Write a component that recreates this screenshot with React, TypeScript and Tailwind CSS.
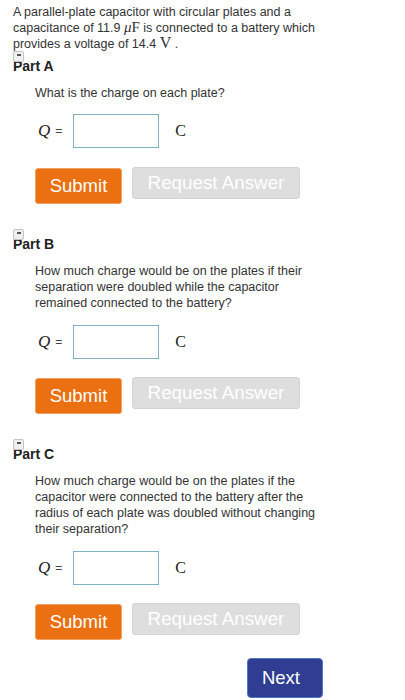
import React from "react"

const serif = "font-['Liberation_Serif',serif]"

function Toggle() {
  // small collapse box that sits over the top of the part heading
  return (
    <span className="absolute left-0 top-[-7px] w-[11px] h-[11px] rounded-[2px] border border-[#c4c4c4] bg-[#f0f0f0] flex justify-center">
      <span className="mt-[2px] w-[4px] h-[1.5px] bg-[#555]" />
    </span>
  )
}

function PartHeader({ label, className }: { label: string; className?: string }) {
  return (
    <div className={"relative text-[14px] leading-[16px] font-bold text-[#222] " + (className ?? "")}>
      <Toggle />
      {label}
    </div>
  )
}

function AnswerRow({ className }: { className?: string }) {
  return (
    <div className={"flex items-center pl-[25px] " + (className ?? "")}>
      <span className={serif + " italic text-[17px] text-[#222]"}>Q</span>
      <span className="ml-[5px] text-[12px] text-[#444]">=</span>
      <input
        className="ml-[11px] w-[86px] h-[34px] border-[1.5px] border-[#82b1c2] outline-none"
        autoComplete="off"
      />
      <span className={serif + " ml-[16px] text-[16px] text-[#222]"}>C</span>
    </div>
  )
}

function Buttons({ className }: { className?: string }) {
  return (
    <div className={"flex items-start pl-[22px] " + (className ?? "")}>
      <button className="mt-[1px] w-[87px] h-[36px] rounded-[3px] bg-[#ea7011] border border-[#f0a060] text-white text-[18.5px] leading-none pt-[1px]">
        Submit
      </button>
      <button className="ml-[10px] w-[168px] h-[32px] rounded-[3px] bg-[#dedede] border border-[#d4d4d4] text-white text-[18.8px] leading-none">
        Request Answer
      </button>
    </div>
  )
}

export default function App() {
  return (
    <div className="w-[405px] h-[700px] bg-white pl-[13px] pt-[4px] font-['Liberation_Sans',Arial,sans-serif] text-[#333]">
      <p className="w-[330px] text-[12.5px] leading-[16px]">
        A parallel-plate capacitor with circular plates and a capacitance of 11.9{" "}
        <span className={serif + " text-[15px] leading-[14px]"}>
          <i>μ</i>F
        </span>{" "}
        is connected to a battery which provides a voltage of 14.4{" "}
        <span className={serif + " text-[16px] leading-[14px]"}>V</span> .
      </p>

      <PartHeader label="Part A" className="mt-[6px]" />
      <p className="mt-[11px] pl-[22px] text-[12.5px] leading-[16px]">What is the charge on each plate?</p>
      <AnswerRow className="mt-[13px]" />
      <Buttons className="mt-[19px]" />

      <PartHeader label="Part B" className="mt-[32px]" />
      <p className="mt-[11px] pl-[22px] w-[300px] text-[12.5px] leading-[16px]">
        How much charge would be on the plates if their separation were doubled while the capacitor remained
        connected to the battery?
      </p>
      <AnswerRow className="mt-[14px]" />
      <Buttons className="mt-[18px]" />

      <PartHeader label="Part C" className="mt-[32px]" />
      <p className="mt-[11px] pl-[22px] w-[318px] text-[12.5px] leading-[16px]">
        How much charge would be on the plates if the capacitor were connected to the battery after the radius of
        each plate was doubled without changing their separation?
      </p>
      <AnswerRow className="mt-[14px]" />
      <Buttons className="mt-[18px]" />

      <div className="mt-[18px] pl-[234px]">
        <button className="w-[76px] h-[40px] rounded-[4px] bg-[#2f3d92] border border-[#4f79c8] text-white text-[18.5px] leading-none pr-[8px]">
          Next
        </button>
      </div>
    </div>
  )
}
